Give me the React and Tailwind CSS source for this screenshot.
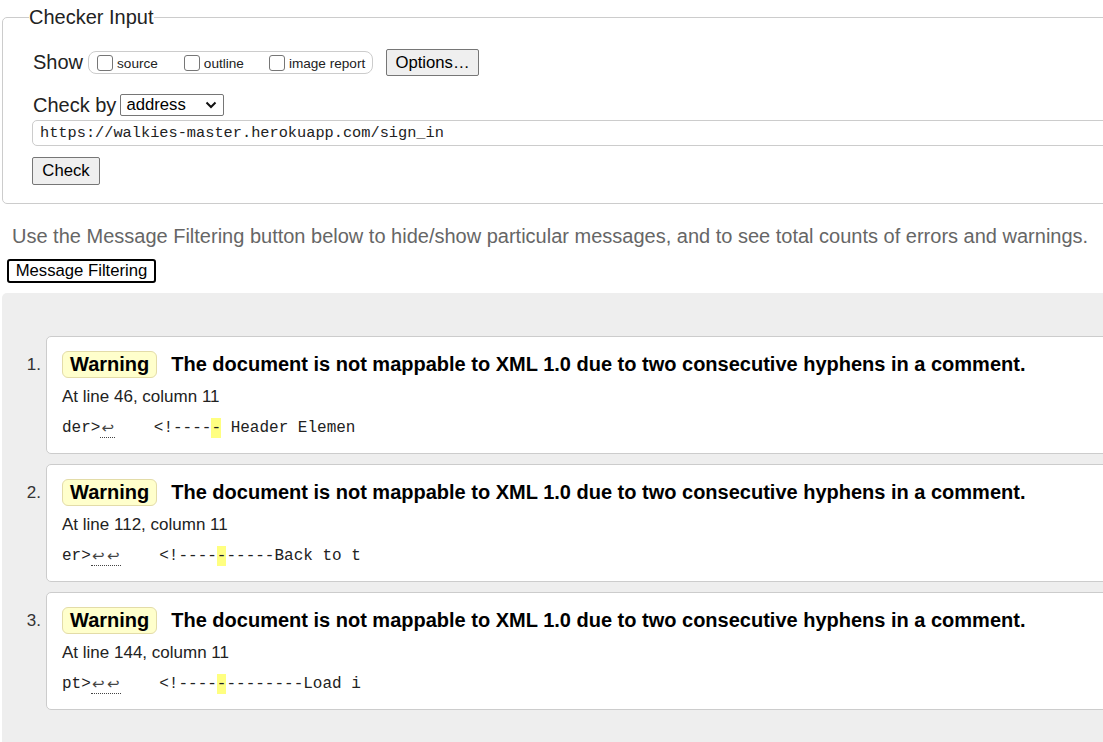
import React from "react"

const messages = [
  { n: 1, line: 46, pre: "der>", lf: 1, before: "<!----", after: " Header Elemen" },
  { n: 2, line: 112, pre: "er>", lf: 2, before: "<!----", after: "-----Back to t" },
  { n: 3, line: 144, pre: "pt>", lf: 2, before: "<!----", after: "--------Load i" },
]

function Checkbox({ label, className = "" }) {
  return (
    <span className={`flex items-center ${className}`}>
      <span className="inline-block w-[16px] h-[16px] border border-[#767676] rounded-[3px] bg-white" />
      <span className="ml-[4px] text-[13.6px] leading-[16px] mt-[3px] text-[#222]">{label}</span>
    </span>
  )
}

function Message({ m }) {
  return (
    <div className="flex">
      <div className="w-[44px] shrink-0 text-right pr-[5px] pt-[19px] text-[17px] leading-[20px] text-[#333]">
        {m.n}.
      </div>
      <div className="flex-1 h-[118px] border border-[#ccc] rounded-[5px] bg-white pl-[15px] pt-[14px]">
        <div className="flex items-center h-[27px]">
          <span className="h-[27px] px-[7px] bg-[#ffffcc] border border-[#e3dca8] rounded-[6px] font-bold text-[20px] leading-[25px]">
            Warning
          </span>
          <span className="ml-[14px] font-bold text-[20px] leading-[25px] text-black whitespace-nowrap">
            The document is not mappable to XML 1.0 due to two consecutive hyphens in a comment.
          </span>
        </div>
        <div className="mt-[9px] text-[17px] leading-[20px] text-[#222]">
          At line {m.line}, column 11
        </div>
        <div className="mt-[11px] font-['Liberation_Mono',monospace] text-[16px] leading-[20px] whitespace-pre text-[#222] flex items-end">
          <span>{m.pre}</span>
          <span className="inline-flex border-b border-dotted border-[#444] leading-[18px]">
            {Array.from({ length: m.lf }).map((_, i) => (
              <span key={i} className="inline-block w-[15px] text-center font-['DejaVu_Sans',sans-serif] text-[15px] text-[#444]">
                ↩
              </span>
            ))}
          </span>
          <span>{"    " + m.before}</span>
          <span className="bg-[#ffff80]">-</span>
          <span>{m.after}</span>
        </div>
      </div>
    </div>
  )
}

export default function App() {
  return (
    <div className="w-[1103px] h-[742px] overflow-hidden bg-white font-['Liberation_Sans',Arial,sans-serif] text-black flex flex-col">
      <div className="w-[1200px] pt-[6px] shrink-0">
        <fieldset className="ml-[2px] border border-[#ccc] rounded-[5px] pl-[29px] pb-[18px]">
          <legend className="-ml-[3px] text-[20px] leading-[23px] text-[#222]">Checker Input</legend>

          {/* Show row */}
          <div className="mt-[20px] flex items-center h-[27px]">
            <span className="text-[20px] leading-[23px] text-[#222] ml-[1px]">Show</span>
            <div className="ml-[5px] flex items-center h-[23px] w-[285px] pl-[8px] border border-[#ccc] rounded-[8px]">
              <Checkbox label="source" />
              <Checkbox label="outline" className="ml-[26px]" />
              <Checkbox label="image report" className="ml-[25px]" />
            </div>
            <button className="ml-[13px] h-[27px] w-[93px] bg-[#efefef] border border-[#767676] rounded-[2px] text-[16.7px] leading-[20px] text-black">
              Options…
            </button>
          </div>

          {/* Check by row */}
          <div className="mt-[18px] flex items-center h-[22px]">
            <span className="text-[20px] leading-[23px] text-[#222] ml-[1px]">Check by</span>
            <div className="ml-[4px] h-[22px] w-[104px] border border-[#767676] rounded-[2px] bg-white flex items-center pl-[5px] pr-[6px] justify-between">
              <span className="text-[16.7px] leading-[20px]">address</span>
              <svg width="12" height="8" viewBox="0 0 12 8">
                <polyline points="1.5,1.5 6,6 10.5,1.5" fill="none" stroke="#111" strokeWidth="2" />
              </svg>
            </div>
          </div>

          <div className="mt-[4px] h-[26px] border border-[#ccc] rounded-[5px] flex items-center pl-[7px] font-['Liberation_Mono',monospace] text-[15.3px] text-[#222]">
            https://walkies-master.herokuapp.com/sign_in
          </div>

          <button className="mt-[11px] h-[28px] w-[68px] bg-[#efefef] border border-[#767676] rounded-[2px] text-[16.7px] leading-[20px] text-black block">
            Check
          </button>
        </fieldset>
      </div>

      <p className="mt-[21px] ml-[12px] text-[20px] leading-[23px] text-[#666] whitespace-nowrap shrink-0">
        Use the Message Filtering button below to hide/show particular messages, and to see total counts of errors and warnings.
      </p>

      <button className="mt-[11px] ml-[7px] self-start h-[24px] w-[149px] border-2 border-black rounded-[3px] bg-white text-[16.7px] leading-[20px] shrink-0">
        Message Filtering
      </button>

      <div className="mt-[10px] ml-[2px] w-[1200px] flex-1 bg-[#eeeeee] rounded-tl-[5px] pt-[43px] flex flex-col gap-[10px]">
        {messages.map((m) => (
          <Message key={m.n} m={m} />
        ))}
      </div>
    </div>
  )
}
